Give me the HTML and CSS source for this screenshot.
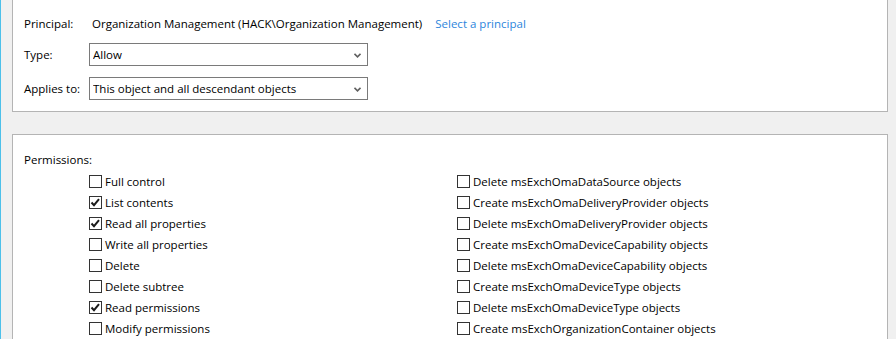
FILE: index.html
```html
<!DOCTYPE html>
<html lang="en">
<head>
    <meta charset="UTF-8">
    <meta name="viewport" content="width=device-width, initial-scale=1.0">
    <title>Permission Entry</title>
    <link rel="stylesheet" href="styles.css">
</head>
<body>
    <div class="window">
        <div class="panel panel-top">
            <div class="field field-principal">
                <span class="label">Principal:</span>
                <span class="principal">Organization Management (HACK\Organization Management)</span>
                <a class="link" href="#">Select a principal</a>
            </div>
            <div class="field">
                <label class="label" for="type">Type:</label>
                <div class="select">
                    <select id="type" name="type">
                        <option>Allow</option>
                        <option>Deny</option>
                    </select>
                    <svg class="chevron" width="7" height="5" viewBox="0 0 7 5"><path d="M0.5 0.8 L3.5 3.8 L6.5 0.8" fill="none" stroke="#606060" stroke-width="1.6"/></svg>
                </div>
            </div>
            <div class="field">
                <label class="label" for="applies">Applies to:</label>
                <div class="select">
                    <select id="applies" name="applies">
                        <option>This object and all descendant objects</option>
                        <option>This object only</option>
                    </select>
                    <svg class="chevron" width="7" height="5" viewBox="0 0 7 5"><path d="M0.5 0.8 L3.5 3.8 L6.5 0.8" fill="none" stroke="#606060" stroke-width="1.6"/></svg>
                </div>
            </div>
        </div>

        <div class="panel panel-perms">
            <div class="perm-title">Permissions:</div>
            <div class="perm-grid">
                <label class="check"><input type="checkbox"><span class="box"><svg viewBox="0 0 11 11"><path d="M1.5 5.5 L4 8.2 L9 2.2" fill="none" stroke="#1a1a1a" stroke-width="2"/></svg></span>Full control</label>
                <label class="check"><input type="checkbox" checked><span class="box"><svg viewBox="0 0 11 11"><path d="M1.5 5.5 L4 8.2 L9 2.2" fill="none" stroke="#1a1a1a" stroke-width="2"/></svg></span>List contents</label>
                <label class="check"><input type="checkbox" checked><span class="box"><svg viewBox="0 0 11 11"><path d="M1.5 5.5 L4 8.2 L9 2.2" fill="none" stroke="#1a1a1a" stroke-width="2"/></svg></span>Read all properties</label>
                <label class="check"><input type="checkbox"><span class="box"><svg viewBox="0 0 11 11"><path d="M1.5 5.5 L4 8.2 L9 2.2" fill="none" stroke="#1a1a1a" stroke-width="2"/></svg></span>Write all properties</label>
                <label class="check"><input type="checkbox"><span class="box"><svg viewBox="0 0 11 11"><path d="M1.5 5.5 L4 8.2 L9 2.2" fill="none" stroke="#1a1a1a" stroke-width="2"/></svg></span>Delete</label>
                <label class="check"><input type="checkbox"><span class="box"><svg viewBox="0 0 11 11"><path d="M1.5 5.5 L4 8.2 L9 2.2" fill="none" stroke="#1a1a1a" stroke-width="2"/></svg></span>Delete subtree</label>
                <label class="check"><input type="checkbox" checked><span class="box"><svg viewBox="0 0 11 11"><path d="M1.5 5.5 L4 8.2 L9 2.2" fill="none" stroke="#1a1a1a" stroke-width="2"/></svg></span>Read permissions</label>
                <label class="check"><input type="checkbox"><span class="box"><svg viewBox="0 0 11 11"><path d="M1.5 5.5 L4 8.2 L9 2.2" fill="none" stroke="#1a1a1a" stroke-width="2"/></svg></span>Modify permissions</label>

                <label class="check"><input type="checkbox"><span class="box"><svg viewBox="0 0 11 11"><path d="M1.5 5.5 L4 8.2 L9 2.2" fill="none" stroke="#1a1a1a" stroke-width="2"/></svg></span>Delete msExchOmaDataSource objects</label>
                <label class="check"><input type="checkbox"><span class="box"><svg viewBox="0 0 11 11"><path d="M1.5 5.5 L4 8.2 L9 2.2" fill="none" stroke="#1a1a1a" stroke-width="2"/></svg></span>Create msExchOmaDeliveryProvider objects</label>
                <label class="check"><input type="checkbox"><span class="box"><svg viewBox="0 0 11 11"><path d="M1.5 5.5 L4 8.2 L9 2.2" fill="none" stroke="#1a1a1a" stroke-width="2"/></svg></span>Delete msExchOmaDeliveryProvider objects</label>
                <label class="check"><input type="checkbox"><span class="box"><svg viewBox="0 0 11 11"><path d="M1.5 5.5 L4 8.2 L9 2.2" fill="none" stroke="#1a1a1a" stroke-width="2"/></svg></span>Create msExchOmaDeviceCapability objects</label>
                <label class="check"><input type="checkbox"><span class="box"><svg viewBox="0 0 11 11"><path d="M1.5 5.5 L4 8.2 L9 2.2" fill="none" stroke="#1a1a1a" stroke-width="2"/></svg></span>Delete msExchOmaDeviceCapability objects</label>
                <label class="check"><input type="checkbox"><span class="box"><svg viewBox="0 0 11 11"><path d="M1.5 5.5 L4 8.2 L9 2.2" fill="none" stroke="#1a1a1a" stroke-width="2"/></svg></span>Create msExchOmaDeviceType objects</label>
                <label class="check"><input type="checkbox"><span class="box"><svg viewBox="0 0 11 11"><path d="M1.5 5.5 L4 8.2 L9 2.2" fill="none" stroke="#1a1a1a" stroke-width="2"/></svg></span>Delete msExchOmaDeviceType objects</label>
                <label class="check"><input type="checkbox"><span class="box"><svg viewBox="0 0 11 11"><path d="M1.5 5.5 L4 8.2 L9 2.2" fill="none" stroke="#1a1a1a" stroke-width="2"/></svg></span>Create msExchOrganizationContainer objects</label>
            </div>
        </div>
    </div>
</body>
</html>
```

FILE: styles.css
```css
html, body {
    margin: 0;
    padding: 0;
    height: 100%;
    overflow: hidden;
}

body {
    font-family: "Open Sans", "Noto Sans", Arial, sans-serif;
    font-size: 11.5px;
    color: #000;
    background-color: #f0f0f0;
    border-left: 1px solid #4cc0ea;
}

.window {
    padding: 0 8px 0 11px;
}

.panel {
    background-color: #fff;
    border: 1px solid #b4b4b4;
    padding-left: 11px;
}

.panel-top {
    border-top: none;
    padding-top: 15px;
    padding-bottom: 11px;
    display: flex;
    flex-direction: column;
    gap: 11px;
}

.field {
    display: flex;
    align-items: center;
    height: 23px;
}

.field-principal {
    height: 16px;
    margin-bottom: 1px;
}

.label {
    width: 65px;
    flex-shrink: 0;
}

.principal {
    margin-left: 3px;
}

.link {
    margin-left: 13px;
    color: #2c86dc;
    text-decoration: none;
}

.select {
    position: relative;
    width: 279px;
    height: 23px;
}

.select select {
    appearance: none;
    -webkit-appearance: none;
    width: 100%;
    height: 100%;
    margin: 0;
    padding: 0 0 0 3px;
    border: 1px solid #7a7a7a;
    border-radius: 0;
    background-color: #fff;
    font: inherit;
    color: #000;
}

.chevron {
    position: absolute;
    right: 7px;
    top: 10px;
}

.panel-perms {
    margin-top: 22px;
    padding-top: 17px;
    padding-bottom: 30px;
}

.perm-title {
    line-height: 16px;
}

.perm-grid {
    display: grid;
    grid-template-rows: repeat(8, 21px);
    grid-template-columns: 368px auto;
    grid-auto-flow: column;
    margin-top: 3px;
    padding-left: 65px;
}

.check {
    display: flex;
    align-items: center;
    gap: 3px;
}

.check input {
    display: none;
}

.box {
    width: 11px;
    height: 11px;
    border: 1px solid #333;
    background-color: #fff;
    flex-shrink: 0;
}

.box svg {
    display: none;
    width: 11px;
    height: 11px;
}

.check input:checked + .box svg {
    display: block;
}
```
